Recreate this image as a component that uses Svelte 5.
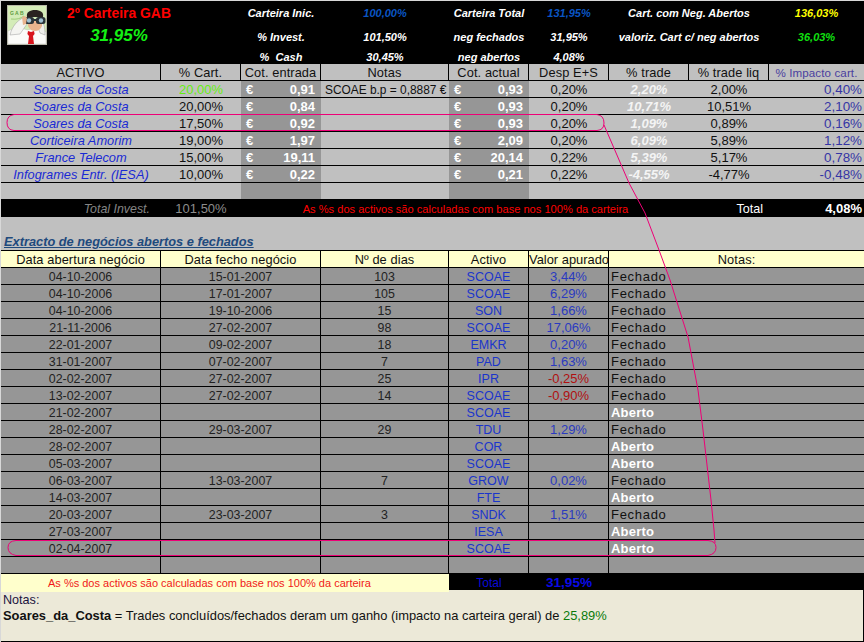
<script>
  const topRows = [
    ['Carteira Inic.', '100,00%', 'Carteira Total', '131,95%', 'Cart. com Neg. Abertos', '136,03%'],
    ['% Invest.', '101,50%', 'neg fechados', '31,95%', 'valoriz. Cart c/ neg abertos', '36,03%'],
    ['%  Cash', '30,45%', 'neg abertos', '4,08%', '', '']
  ];

  const activos = [
    { nome: 'Soares da Costa', pct: '20,00%', novo: true, entrada: '0,91', notas: 'SCOAE b.p = 0,8887 €', actual: '0,93', desp: '0,20%', trade: '2,20%', liq: '2,00%', imp: '0,40%' },
    { nome: 'Soares da Costa', pct: '20,00%', entrada: '0,84', notas: '', actual: '0,93', desp: '0,20%', trade: '10,71%', liq: '10,51%', imp: '2,10%' },
    { nome: 'Soares da Costa', pct: '17,50%', entrada: '0,92', notas: '', actual: '0,93', desp: '0,20%', trade: '1,09%', liq: '0,89%', imp: '0,16%' },
    { nome: 'Corticeira Amorim', pct: '19,00%', entrada: '1,97', notas: '', actual: '2,09', desp: '0,20%', trade: '6,09%', liq: '5,89%', imp: '1,12%' },
    { nome: 'France Telecom', pct: '15,00%', entrada: '19,11', notas: '', actual: '20,14', desp: '0,22%', trade: '5,39%', liq: '5,17%', imp: '0,78%' },
    { nome: 'Infogrames Entr. (IESA)', pct: '10,00%', entrada: '0,22', notas: '', actual: '0,21', desp: '0,22%', trade: '-4,55%', liq: '-4,77%', imp: '-0,48%' }
  ];

  const negocios = [
    ['04-10-2006', '15-01-2007', '103', 'SCOAE', '3,44%'],
    ['04-10-2006', '17-01-2007', '105', 'SCOAE', '6,29%'],
    ['04-10-2006', '19-10-2006', '15', 'SON', '1,66%'],
    ['21-11-2006', '27-02-2007', '98', 'SCOAE', '17,06%'],
    ['22-01-2007', '09-02-2007', '18', 'EMKR', '0,20%'],
    ['31-01-2007', '07-02-2007', '7', 'PAD', '1,63%'],
    ['02-02-2007', '27-02-2007', '25', 'IPR', '-0,25%'],
    ['13-02-2007', '27-02-2007', '14', 'SCOAE', '-0,90%'],
    ['21-02-2007', '', '', 'SCOAE', ''],
    ['28-02-2007', '29-03-2007', '29', 'TDU', '1,29%'],
    ['28-02-2007', '', '', 'COR', ''],
    ['05-03-2007', '', '', 'SCOAE', ''],
    ['06-03-2007', '13-03-2007', '7', 'GROW', '0,02%'],
    ['14-03-2007', '', '', 'FTE', ''],
    ['20-03-2007', '23-03-2007', '3', 'SNDK', '1,51%'],
    ['27-03-2007', '', '', 'IESA', ''],
    ['02-04-2007', '', '', 'SCOAE', '']
  ];

  const topClasses = ['lbl', 'v-blue', 'lbl', 'v-blue', 'lbl', 'v-yellow'];
</script>

<div class="sheet">
  <section class="banner">
    <div class="brand">
      <svg class="avatar" viewBox="0 0 40 40" aria-hidden="true">
        <rect width="40" height="40" fill="#b8b8a8" />
        <rect x="1" y="1" width="38" height="38" fill="#d4ecb8" />
        <text x="3" y="10" class="gab">G A B</text>
        <path d="M4 14q8 1 13-3" stroke="#8fc46a" stroke-width=".8" fill="none" />
        <path d="M1 39V26l9-4 11 3 9-3 9 5v12z" fill="#fbfbf8" stroke="#b5b5b5" stroke-width=".4" />
        <path d="M3 30c2-9 8-15 13-17l4 6-7 10z" fill="#f4f4f0" stroke="#9a9a9a" stroke-width=".5" />
        <path d="M38 30c0-8-1-12-4-15l-4 5 3 8z" fill="#f0f0ec" stroke="#9a9a9a" stroke-width=".5" />
        <path d="M20 12c-1-5 3-7 8-7s9 2 8 7z" fill="#2a2320" />
        <path d="M21 14h14v7c-1 3-4 5-7 5s-6-2-7-5z" fill="#e9b48e" />
        <rect x="17.5" y="12" width="9.5" height="7" rx="2.5" fill="#2b3338" />
        <rect x="29" y="12" width="9.5" height="7" rx="2.5" fill="#2b3338" />
        <rect x="26" y="14" width="4" height="2" fill="#2b3338" />
        <circle cx="22" cy="15.5" r="2.2" fill="#9fc0d2" />
        <circle cx="34" cy="15.5" r="2.2" fill="#9fc0d2" />
        <path d="M15 12l3-1 2 2-1 6-3 1z" fill="#e9b48e" />
        <path d="M21 26l3 1 3-1 .6 3-1.6 2 1 8h-6l1-8-1.6-2z" fill="#d8141c" />
      </svg>
      <div class="brand-text">
        <div class="titulo">2º Carteira GAB</div>
        <div class="ganho">31,95%</div>
      </div>
    </div>
    {#each topRows as row, r}
      {#each row as cell, c}
        <div
          class="tc {topClasses[c]}"
          class:v-white={r > 0 && c % 2 === 1 && c < 4}
          class:v-green={r === 1 && c === 5}
        >{cell}</div>
      {/each}
    {/each}
  </section>

  <section class="activos">
    <div class="row head cols-a">
      <div>ACTIVO</div>
      <div>% Cart.</div>
      <div>Cot. entrada</div>
      <div>Notas</div>
      <div>Cot. actual</div>
      <div>Desp E+S</div>
      <div>% trade</div>
      <div>% trade liq</div>
      <div class="head-imp">% Impacto cart.</div>
    </div>
    {#each activos as a}
      <div class="row body cols-a">
        <div class="nome">{a.nome}</div>
        <div class="num" class:novo={a.novo}>{a.pct}</div>
        <div class="cot"><span class="eur">€</span><span>{a.entrada}</span></div>
        <div class="nota">{a.notas}</div>
        <div class="cot"><span class="eur">€</span><span>{a.actual}</span></div>
        <div class="num">{a.desp}</div>
        <div class="trade">{a.trade}</div>
        <div class="num">{a.liq}</div>
        <div class="impacto">{a.imp}</div>
      </div>
    {/each}
    <div class="row blank cols-a">
      <div></div><div></div><div class="cot"></div><div></div><div class="cot"></div>
    </div>
    <div class="totals cols-a">
      <div class="t-label">Total Invest.</div>
      <div class="t-val">101,50%</div>
      <div class="t-msg">As %s dos activos são calculadas com base nos 100% da carteira</div>
      <div class="t-total">Total</div>
      <div class="t-pct">4,08%</div>
    </div>
  </section>

  <h2 class="extracto">Extracto de negócios abertos e fechados</h2>

  <section class="negocios">
    <div class="row head light cols-b">
      <div>Data abertura negócio</div>
      <div>Data fecho negócio</div>
      <div>Nº de dias</div>
      <div>Activo</div>
      <div class="tight">Valor apurado</div>
      <div>Notas:</div>
    </div>
    {#each negocios as n}
      <div class="row neg cols-b">
        <div>{n[0]}</div>
        <div>{n[1]}</div>
        <div>{n[2]}</div>
        <div class="sigla">{n[3]}</div>
        <div class="valor" class:perda={n[4].startsWith('-')}>{n[4]}</div>
        <div class="estado" class:aberto={!n[1]}>{n[1] ? 'Fechado' : 'Aberto'}</div>
      </div>
    {/each}
    <div class="row neg cols-b">
      <div></div><div></div><div></div><div></div><div></div><div></div>
    </div>
    <div class="rodape cols-b">
      <div class="aviso">As %s dos activos são calculadas com base nos 100% da carteira</div>
      <div class="total-azul">Total</div>
      <div class="pct-azul">31,95%</div>
      <div class="fim"></div>
    </div>
  </section>

  <section class="notas">
    <div class="notas-t">Notas:</div>
    <p><b>Soares_da_Costa</b> = Trades concluídos/fechados deram um ganho (impacto na carteira geral) de <span class="verde">25,89%</span></p>
  </section>

  <!-- marcas à mão por cima da folha -->
  <svg class="marcas" viewBox="0 0 864 642" aria-hidden="true">
    <path d="M14 114.5H597Q604 115.5 604 123Q604 130 597 130.5H14Q7 130 7 122.5Q7 115.5 14 114.5Z" />
    <path d="M16 540.5H708Q716 541 716 547.5Q716 554 708 555.5H16Q8 554 8 547.5Q8 541 16 540.5Z" />
    <polyline points="604,125 629,183 645,213 659,250 670,280 688,337 698,390 703,430 711,500 714,530 715,543" />
  </svg>
</div>

<style>
  :global(body) {
    margin: 0;
  }

  .sheet {
    position: relative;
    width: 864px;
    height: 642px;
    box-sizing: border-box;
    padding: 1px 0 0 1px;
    background: #d8d8d8;
    font-family: "Liberation Sans", Arial, sans-serif;
    font-size: 12.4px;
    color: #111;
    overflow: hidden;
  }

  .cols-a {
    display: grid;
    grid-template-columns: 160px 80px 80px 128px 80px 80px 80px 80px 95px;
  }

  .cols-b {
    display: grid;
    grid-template-columns: 160px 160px 128px 80px 80px 255px;
  }

  .banner {
    display: grid;
    grid-template-columns: 240px 80px 128px 80px 80px 160px 95px;
    grid-template-rows: 24px 24px 15px;
    background: #000;
    color: #fff;
  }

  .brand {
    grid-row: 1 / 4;
    grid-column: 1;
    display: flex;
    align-items: flex-start;
  }

  .brand + .tc {
    grid-column: 2;
  }

  .avatar {
    width: 40px;
    height: 40px;
    margin: 4px 0 0 6px;
  }

  .gab {
    font-size: 5px;
    font-weight: bold;
    fill: #5c9a3e;
  }

  .brand-text {
    width: 142px;
    margin-left: 1px;
    text-align: center;
    font-weight: bold;
  }

  .titulo {
    height: 24px;
    line-height: 24px;
    font-size: 13.9px;
    color: #ff0000;
  }

  .ganho {
    line-height: 22px;
    font-size: 17px;
    font-style: italic;
    color: #14f014;
  }

  .tc {
    white-space: pre;
    text-align: center;
    align-self: center;
    font-size: 11px;
    font-weight: bold;
    font-style: italic;
    line-height: 14px;
  }

  .v-blue {
    color: #0a55c4;
  }

  .v-yellow {
    color: #ffff00;
  }

  .v-white {
    color: #fff;
  }

  .v-green {
    color: #10e010;
  }

  .row {
    height: 17px;
    box-sizing: border-box;
    border-bottom: 1px solid #000;
    background: #c0c0c0;
  }

  .row > div {
    height: 16px;
    line-height: 18px;
    text-align: center;
    white-space: nowrap;
    overflow: hidden;
  }

  .head > div {
    box-sizing: border-box;
    border-right: 1px solid #000;
    font-size: 12.8px;
    letter-spacing: 0.1px;
  }

  .head > div:last-child {
    border-right: 0;
  }

  .head .head-imp {
    font-size: 11.6px;
    color: #4a3f9f;
  }

  .row .nome {
    font-size: 12.8px;
    font-style: italic;
    color: #1a2ad4;
  }

  .num {
    font-size: 13px;
  }

  .novo {
    color: #66ee11;
  }

  .row .cot {
    display: flex;
    justify-content: space-between;
    box-sizing: border-box;
    padding: 0 6px 0 5px;
    background: #969696;
    color: #fff;
    font-weight: bold;
    font-size: 13px;
  }

  .row .nota {
    text-align: left;
    padding-left: 4px;
    font-size: 11.9px;
  }

  .trade {
    font-size: 13px;
    font-weight: bold;
    font-style: italic;
    color: #f4f4f4;
  }

  .row .impacto {
    text-align: right;
    padding-right: 2px;
    font-size: 13.4px;
    color: #3535a5;
  }

  .blank {
    height: 16px;
    border-bottom: 0;
  }

  .totals {
    height: 18px;
    line-height: 20px;
    background: #000;
    white-space: nowrap;
  }

  .t-label {
    padding-right: 11px;
    text-align: right;
    font-style: italic;
    color: #858585;
  }

  .t-val {
    text-align: center;
    font-size: 13px;
    color: #8c8c8c;
  }

  .t-msg {
    grid-column: 3 / 8;
    text-align: center;
    font-size: 11.1px;
    color: #f00;
    padding-left: 1px;
  }

  .t-total {
    text-align: right;
    padding-right: 6px;
    color: #fff;
    font-size: 12.6px;
  }

  .t-pct {
    text-align: right;
    padding-right: 2px;
    font-weight: bold;
    font-size: 13px;
    color: #fff;
  }

  .extracto {
    height: 33px;
    box-sizing: border-box;
    margin: 0;
    padding: 17px 0 0 3px;
    background: #c0c0c0;
    line-height: 16px;
    font-size: 12.8px;
    font-style: italic;
    font-weight: bold;
    color: #1f4a7d;
    text-decoration: underline;
  }

  .negocios {
    border-top: 1px solid #000;
  }

  .light {
    background: #ffffcc;
  }

  .head .tight {
    letter-spacing: 0;
    font-size: 12.9px;
  }

  .neg {
    background: #969696;
  }

  .neg > div {
    box-sizing: border-box;
    border-right: 1px solid #000;
    font-size: 12.4px;
    color: #222;
  }

  .neg > div:last-child {
    border-right: 0;
  }

  .neg .sigla {
    font-size: 12.5px;
    color: #1a35cc;
  }

  .neg .valor {
    font-size: 13px;
    color: #2a3ac0;
  }

  .neg .perda {
    color: #b01010;
  }

  .neg .estado {
    text-align: left;
    padding-left: 2px;
    font-size: 13px;
    letter-spacing: 0.7px;
    color: #111;
  }

  .neg .aberto {
    font-weight: bold;
    letter-spacing: 0.2px;
    color: #fff;
  }

  .rodape {
    height: 16px;
    line-height: 18px;
    background: #000;
    white-space: nowrap;
  }

  .aviso {
    grid-column: 1 / 4;
    padding-left: 47px;
    background: #ffffcc;
    font-size: 11px;
    color: #f01818;
  }

  .total-azul {
    text-align: center;
    font-size: 12px;
    color: #0a0ad8;
  }

  .pct-azul {
    text-align: center;
    font-size: 13.6px;
    font-weight: bold;
    color: #0a0ae8;
  }

  .notas {
    height: 52px;
    box-sizing: border-box;
    padding: 2px 0 0 2px;
    background: #ece9d8;
    border-right: 1px solid #000;
    border-bottom: 1px solid #000;
    font-size: 12.9px;
    color: #1c1440;
  }

  .notas-t {
    line-height: 16px;
    font-size: 12.6px;
  }

  .notas p {
    margin: 0;
    line-height: 16px;
    color: #111;
  }

  .verde {
    color: #0a7a0a;
  }

  .marcas {
    position: absolute;
    inset: 0;
    width: 864px;
    height: 642px;
    fill: none;
    stroke: #ee0077;
    stroke-width: 1;
    pointer-events: none;
  }
</style>
